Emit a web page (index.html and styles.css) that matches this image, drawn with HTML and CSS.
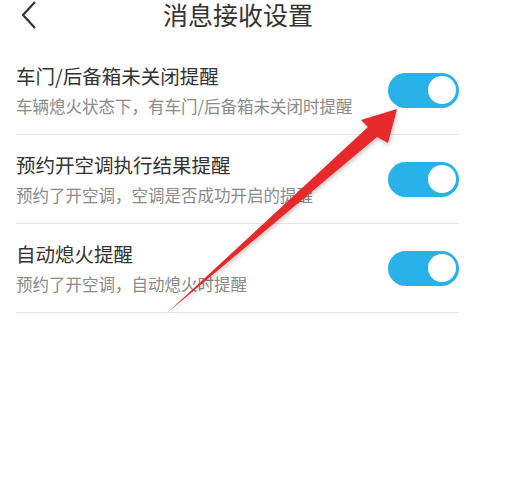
FILE: index.html
```html
<!DOCTYPE html>
<html lang="zh">
<head>
<meta charset="utf-8">
<link rel="stylesheet" href="styles.css">
</head>
<body>
<div class="page">
  <header class="header">
    <div class="back">
      <svg width="18" height="28" viewBox="0 0 18 28"><polyline points="15,1 3,14 15,27" fill="none" stroke="#333" stroke-width="2.2"/></svg>
    </div>
    <div class="title">消息接收设置</div>
  </header>
  <div class="list">
    <div class="row">
      <div class="text">
        <div class="name">车门/后备箱未关闭提醒</div>
        <div class="desc">车辆熄火状态下，有车门/后备箱未关闭时提醒</div>
      </div>
      <div class="toggle"><div class="knob"></div></div>
    </div>
    <div class="row">
      <div class="text">
        <div class="name">预约开空调执行结果提醒</div>
        <div class="desc">预约了开空调，空调是否成功开启的提醒</div>
      </div>
      <div class="toggle"><div class="knob"></div></div>
    </div>
    <div class="row">
      <div class="text">
        <div class="name">自动熄火提醒</div>
        <div class="desc">预约了开空调，自动熄火时提醒</div>
      </div>
      <div class="toggle"><div class="knob"></div></div>
    </div>
  </div>
  <svg class="arrow" width="508" height="490" viewBox="0 0 508 490">
    <polygon points="397,109 361,120 368,127 167,313 377,137 388,143" fill="#e8292b"/>
  </svg>
</div>
</body>
</html>
```
FILE: styles.css
```css
html, body {
  margin: 0;
  padding: 0;
  background: #fff;
}
.page {
  position: relative;
  width: 508px;
  height: 490px;
  overflow: hidden;
  font-family: "Noto Sans CJK SC", "Noto Sans", sans-serif;
}
.header {
  height: 46px;
  display: flex;
  align-items: flex-start;
}
.back {
  width: 22px;
  padding-left: 20px;
  padding-top: 1px;
}
.title {
  margin-left: 121px;
  font-size: 25px;
  line-height: 29px;
  color: #333;
}
.list {
  padding: 0 49px 0 16px;
}
.row {
  height: 88px;
  border-bottom: 1px solid #e6e6e6;
  display: flex;
  align-items: center;
  justify-content: space-between;
}
.name {
  font-size: 19.5px;
  line-height: 28px;
  color: #333;
}
.desc {
  margin-top: 4px;
  font-size: 16.5px;
  line-height: 24px;
  color: #8a8a8a;
}
.toggle {
  width: 71px;
  height: 35px;
  border-radius: 18px;
  background: #29b2ea;
  display: flex;
  align-items: center;
  justify-content: flex-end;
  padding-right: 3px;
  box-sizing: border-box;
}
.knob {
  width: 28px;
  height: 28px;
  border-radius: 50%;
  background: #fff;
}
.arrow {
  position: absolute;
  left: 0;
  top: 0;
  filter: drop-shadow(1px 2px 2px rgba(0,0,0,0.25));
}
```
